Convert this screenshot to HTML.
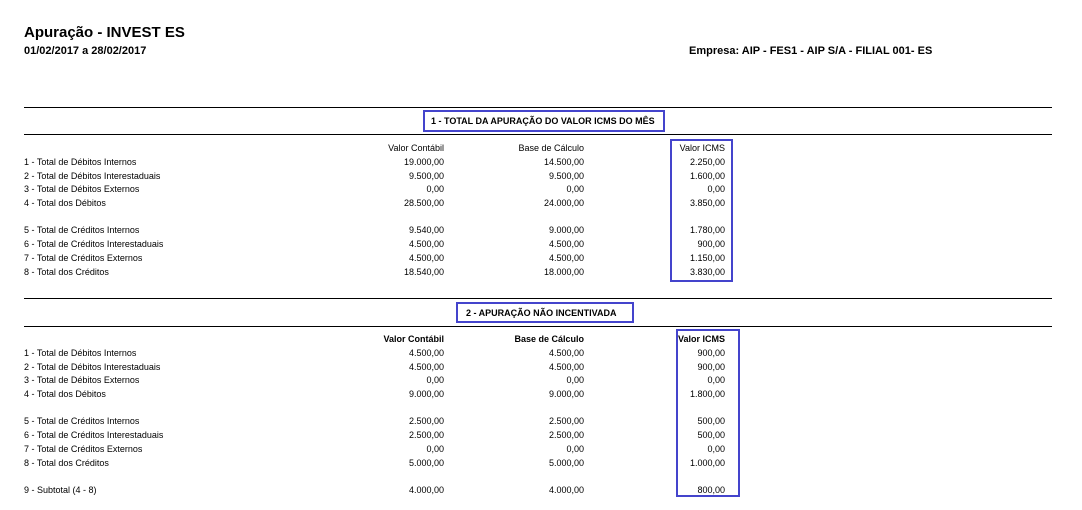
<!DOCTYPE html>
<html><head><meta charset="utf-8"><style>
body{margin:0;width:1082px;height:510px;background:#fff;position:relative;overflow:hidden;font-family:"Liberation Sans","DejaVu Sans",sans-serif;color:#000}
.t{position:absolute;font-size:9px;white-space:nowrap;line-height:11px}
.r{text-align:right}
.b{font-weight:bold}
.hl{position:absolute;left:24px;width:1028px;height:1px;background:#000}
.box{position:absolute;border:2.5px solid #4444cc;box-sizing:border-box}
</style></head><body>
<div class="t b" style="left:24px;top:24px;font-size:15px;line-height:18px">Apuração - INVEST ES</div>
<div class="t b" style="left:24px;top:45px;font-size:11px;line-height:13px">01/02/2017 a 28/02/2017</div>
<div class="t b" style="left:689px;top:45px;font-size:11px;line-height:13px">Empresa: AIP - FES1 - AIP S/A - FILIAL 001- ES</div>

<div class="hl" style="top:107px"></div>
<div class="box" style="left:423px;top:110px;width:242px;height:22px"></div>
<div class="t b" style="left:431px;top:116px">1 - TOTAL DA APURAÇÃO DO VALOR ICMS DO MÊS</div>
<div class="hl" style="top:134px"></div>
<div class="box" style="left:670px;top:139px;width:63px;height:143px"></div>

<div class="hl" style="top:298px"></div>
<div class="box" style="left:456px;top:302px;width:178px;height:21px"></div>
<div class="t b" style="left:466px;top:308px">2 - APURAÇÃO NÃO INCENTIVADA</div>
<div class="hl" style="top:326px"></div>
<div class="box" style="left:676px;top:329px;width:64px;height:168px"></div>

<div id="c"></div>
<script>
function row(y,l,a,b,c,bold){
 var h='';
 if(l)h+='<div class="t" style="left:24px;top:'+(y-5)+'px">'+l+'</div>';
 var cls='t r'+(bold?' b':'');
 h+='<div class="'+cls+'" style="left:344px;width:100px;top:'+(y-5)+'px">'+a+'</div>';
 h+='<div class="'+cls+'" style="left:484px;width:100px;top:'+(y-5)+'px">'+b+'</div>';
 h+='<div class="'+cls+'" style="left:625px;width:100px;top:'+(y-5)+'px">'+c+'</div>';
 return h;
}
var L=['1 - Total de Débitos Internos','2 - Total de Débitos Interestaduais','3 - Total de Débitos Externos','4 - Total dos Débitos','5 - Total de Créditos Internos','6 - Total de Créditos Interestaduais','7 - Total de Créditos Externos','8 - Total dos Créditos'];
var s1=[['19.000,00','14.500,00','2.250,00'],['9.500,00','9.500,00','1.600,00'],['0,00','0,00','0,00'],['28.500,00','24.000,00','3.850,00'],['9.540,00','9.000,00','1.780,00'],['4.500,00','4.500,00','900,00'],['4.500,00','4.500,00','1.150,00'],['18.540,00','18.000,00','3.830,00']];
var s2=[['4.500,00','4.500,00','900,00'],['4.500,00','4.500,00','900,00'],['0,00','0,00','0,00'],['9.000,00','9.000,00','1.800,00'],['2.500,00','2.500,00','500,00'],['2.500,00','2.500,00','500,00'],['0,00','0,00','0,00'],['5.000,00','5.000,00','1.000,00']];
var y1=[162,176,189,203,230,244,258,272];
var y2=[353,367,380,394,421,435,449,463];
var h=row(148,'','Valor Contábil','Base de Cálculo','Valor ICMS');
for(var i=0;i<8;i++)h+=row(y1[i],L[i],s1[i][0],s1[i][1],s1[i][2]);
h+=row(339,'','Valor Contábil','Base de Cálculo','Valor ICMS',true);
for(var i=0;i<8;i++)h+=row(y2[i],L[i],s2[i][0],s2[i][1],s2[i][2]);
h+=row(490,'9 - Subtotal (4 - 8)','4.000,00','4.000,00','800,00');
document.getElementById('c').innerHTML=h;
</script>
</body></html>
